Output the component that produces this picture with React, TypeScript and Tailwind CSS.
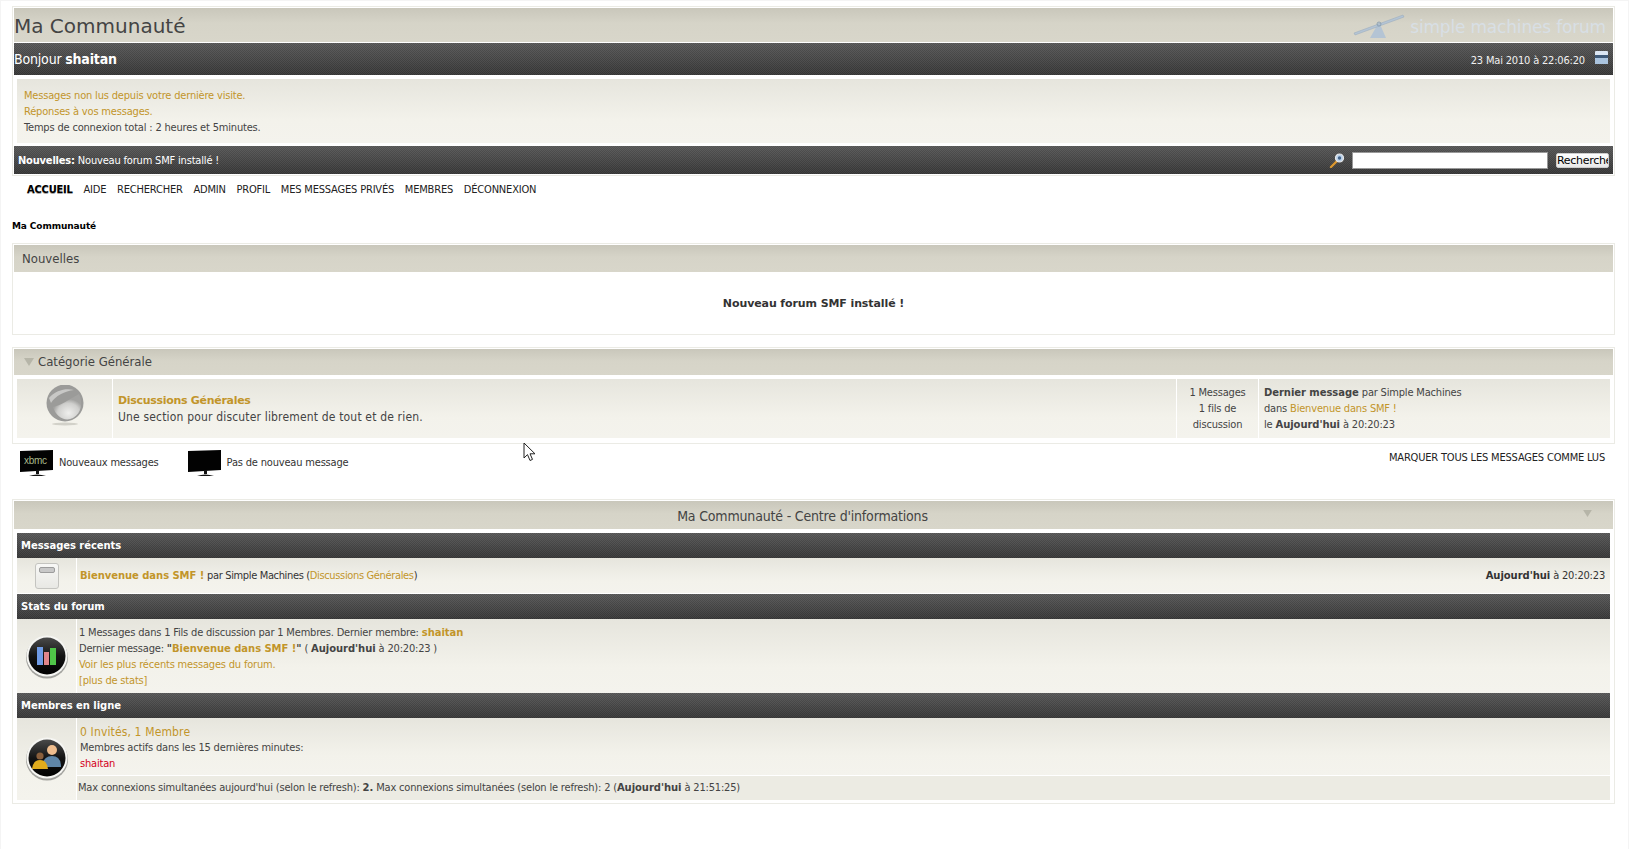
const darkBar =
  'bg-[repeating-conic-gradient(rgba(0,0,0,0.1)_0_25%,rgba(255,255,255,0.03)_0_50%),linear-gradient(#5c5c5c,#3a3a3a)] bg-[length:2px_2px,100%_100%]'
const tanBar = 'bg-[linear-gradient(#c9c7bb,#d6d4c8_45%,#d8d6ca)]'
const cell = 'bg-[linear-gradient(#e6e5dd,#f3f2eb_65%,#f4f3ed)]'
const link = 'text-[#c2952a]'
const bold = "font-bold text-[10px] tracking-[-0.05px] font-['DejaVu_Sans',sans-serif]"

function Triangle({ className }: { className: string }) {
  return (
    <svg viewBox="0 0 10 8" className={className}>
      <path d="M0 0h10L5 8z" fill="#b6b5a8" />
    </svg>
  )
}

function SmfLogo() {
  return (
    <div className="flex items-center text-[17px] leading-none text-[#d8dfe5] font-['DejaVu_Sans',sans-serif]">
      <svg width="52" height="26" viewBox="0 0 52 26" className="mr-[5px] mt-[2px]">
        <path d="M17 25 L26 9 L33 25z" fill="#b4c4d4" />
        <path d="M1 20 L50 2 L51 4 L2 22z" fill="#b4c4d4" stroke="#96a9bb" strokeWidth="0.5" />
        <circle cx="26" cy="11" r="2" fill="none" stroke="#8298ac" strokeWidth="0.8" />
      </svg>
      <span className="pt-[4px]">simple machines forum</span>
    </div>
  )
}

function MinusIcon() {
  return (
    <svg width="13" height="13" viewBox="0 0 13 13">
      <rect width="13" height="13" rx="1" fill="#dbe6f3" />
      <rect y="4" width="13" height="3" fill="#3f5a79" />
      <rect y="7" width="13" height="6" rx="1" fill="#a9c3de" />
    </svg>
  )
}

function SearchIcon() {
  return (
    <svg width="16" height="15" viewBox="0 0 16 15">
      <path d="M2 14 L8 8" stroke="#d9962f" strokeWidth="2.4" strokeLinecap="round" />
      <circle cx="10.5" cy="5" r="4" fill="#bcd2ea" stroke="#e8e8e8" strokeWidth="1.2" />
      <circle cx="10.5" cy="5" r="1.7" fill="#41638b" />
    </svg>
  )
}

function ForumSphere() {
  return (
    <svg width="38" height="42" viewBox="0 0 38 42">
      <defs>
        <radialGradient id="sphere" cx="0.55" cy="0.75" r="0.55">
          <stop offset="0" stopColor="#efefed" />
          <stop offset="0.7" stopColor="#cfcfcd" />
          <stop offset="1" stopColor="#a3a3a1" />
        </radialGradient>
      </defs>
      <ellipse cx="19" cy="39" rx="13" ry="1.5" fill="#d2d1c9" />
      <circle cx="19" cy="18" r="18.5" fill="#9b9b99" />
      <path d="M7 22 C14 21 24 14 33 9 C37 17 36 28 27 33 C19 37 10 32 7 22z" fill="url(#sphere)" />
      <path d="M3 13 C10 5 20 3 28 5 C19 6 9 11 5 18z" fill="#c8c8c6" />
    </svg>
  )
}

function Monitor({ logo }: { logo?: boolean }) {
  return (
    <svg width="34" height="28" viewBox="0 0 34 28" className="shrink-0">
      <path d="M0 1 L33 0 V20 L0 22z" fill="#020202" />
      <rect x="16" y="20" width="3" height="4" fill="#111" />
      <path d="M9 26 Q17 23 26 26z" fill="#111" />
      {logo && (
        <text x="4" y="14" fontSize="10" fontFamily="Liberation Sans, sans-serif" fill="#a9b98a" letterSpacing="-0.3">
          xbmc
        </text>
      )}
    </svg>
  )
}

function RoundBadge({ id, children }: { id: string; children: React.ReactNode }) {
  return (
    <svg width="42" height="48" viewBox="0 0 42 48">
      <defs>
        <linearGradient id={id} x1="0" y1="0" x2="0" y2="1">
          <stop offset="0" stopColor="#4a4a4a" />
          <stop offset="0.5" stopColor="#141414" />
          <stop offset="1" stopColor="#000" />
        </linearGradient>
      </defs>
      <circle cx="21" cy="24.5" r="21" fill="#a3a39f" />
      <circle cx="21" cy="23" r="20.5" fill="#f6f6f3" />
      <circle cx="21" cy="23" r="18.5" fill={`url(#${id})`} />
      {children}
    </svg>
  )
}

function PostIcon() {
  return (
    <div className="h-[26px] w-[24px] rounded-[3px] border border-[#c4c4c0] bg-[linear-gradient(#f8f8f6,#e8e8e4)] px-[3px] pt-[3px]">
      <div className="h-[6px] rounded-[2px] border border-[#9c9c9c] bg-[#c8c8c8]" />
    </div>
  )
}

function Cursor() {
  return (
    <svg width="14" height="20" viewBox="0 0 14 20" className="absolute left-[522px] top-[441px]">
      <path d="M1 1 V16 L4.5 12.6 L7 18.5 L9.5 17.4 L7 11.8 H12z" fill="#fff" stroke="#222" strokeWidth="1" />
    </svg>
  )
}

export default function App() {
  return (
    <div className="relative h-[849px] overflow-hidden border-x border-t border-[#f4f4f4] bg-white px-[11px] pt-[5px] text-[11px] leading-[16px] tracking-[-0.18px] text-[#444] font-['DejaVu_Sans_Condensed','DejaVu_Sans',sans-serif]">
      {/* top header */}
      <div className="h-[170px] w-[1603px] border border-[#ebebe5] p-px">
        <div className={`${tanBar} flex h-[34px] w-[1599px] items-center justify-between pr-[7px]`}>
          <span className="pt-[2px] text-[20px] tracking-normal text-[#444] font-['DejaVu_Sans',sans-serif]">Ma Communauté</span>
          <SmfLogo />
        </div>
        <div className={`${darkBar} mt-px flex h-[32px] w-[1599px] items-center text-white`}>
          <span className="text-[14px]">
            Bonjour <b>shaitan</b>
          </span>
          <span className="mr-[10px] ml-auto mt-[3px] text-[#f0f0f0]">23 Mai 2010 à 22:06:20</span>
          <span className="mr-[5px] -mt-[3px]">
            <MinusIcon />
          </span>
        </div>
        <div className="w-[1599px] px-[3px] py-[4px]">
          <div className={`${cell} h-[64px] pl-[7px] pt-[9px]`}>
            <div className={link}>Messages non lus depuis votre dernière visite.</div>
            <div className={link}>Réponses à vos messages.</div>
            <div>Temps de connexion total : 2 heures et 5minutes.</div>
          </div>
        </div>
        <div className={`${darkBar} -mt-px flex h-[28px] w-[1599px] items-center pl-[4px] text-white`}>
          <span className="mt-px">
            <b>Nouvelles:</b> Nouveau forum SMF installé !
          </span>
          <span className="ml-auto mr-[7px]">
            <SearchIcon />
          </span>
          <input className="h-[17px] w-[196px] border border-[#999] bg-white" />
          <div className="mx-[4px] ml-[8px] h-[15px] w-[53px] overflow-hidden rounded-[2px] border border-[#ccc] bg-[linear-gradient(#fff,#e8e8e8)] text-[11px] leading-[14px] tracking-[-0.3px] whitespace-nowrap text-black font-['DejaVu_Sans',sans-serif]">
            Recherche
          </div>
        </div>
      </div>

      {/* menu */}
      <nav className="mt-[6px] flex h-[16px] gap-[10.7px] pl-[15px] whitespace-nowrap text-[#222]">
        <span className="font-bold text-black [text-shadow:0_1px_#aaa]">ACCUEIL</span>
        <span>AIDE</span>
        <span>RECHERCHER</span>
        <span>ADMIN</span>
        <span>PROFIL</span>
        <span>MES MESSAGES PRIVÉS</span>
        <span>MEMBRES</span>
        <span>DÉCONNEXION</span>
      </nav>
      <div className="mt-[20px] text-[9px] font-bold tracking-[-0.1px] text-black font-['DejaVu_Sans',sans-serif]">Ma Communauté</div>

      {/* news */}
      <div className="mt-[9px] h-[92px] w-[1603px] border border-[#ebebe5] p-px">
        <div className={`${tanBar} flex h-[27px] w-[1599px] items-center pl-[8px] text-[13px] tracking-normal`}>Nouvelles</div>
        <div className="pt-[24px] text-center text-[11px] font-bold tracking-[-0.1px] text-[#333] font-['DejaVu_Sans',sans-serif]">
          Nouveau forum SMF installé !
        </div>
      </div>

      {/* category */}
      <div className="mt-[12px] h-[97px] w-[1603px] border border-[#ebebe5] p-px">
        <div className={`${tanBar} flex h-[26px] w-[1599px] items-center pl-[10px] text-[13px] tracking-normal`}>
          <Triangle className="mr-[4px] h-[8px] w-[10px]" />
          Catégorie Générale
        </div>
        <div className="flex h-[63px] w-[1599px] px-[3px] pt-[4px]">
          <div className={`${cell} flex h-[59px] w-[95px] justify-center pt-[6px]`}>
            <ForumSphere />
          </div>
          <div className={`${cell} ml-px flex h-[59px] w-[1063px] flex-col justify-center pl-[5px] pt-px leading-[16px]`}>
            <span className={`${link} text-[11px] font-bold font-['DejaVu_Sans',sans-serif] tracking-[-0.3px]`}>
              Discussions Générales
            </span>
            <span className="text-[12px] tracking-[0.17px]">Une section pour discuter librement de tout et de rien.</span>
          </div>
          <div className={`${cell} ml-px flex h-[59px] w-[81px] items-center justify-center text-center pt-px`}>
            <span>
              1 Messages
              <br />1 fils de
              <br />
              discussion
            </span>
          </div>
          <div className={`${cell} ml-px flex h-[59px] flex-1 flex-col justify-center pl-[5px] pt-px`}>
            <span>
              <b className={bold}>Dernier message</b> par Simple Machines
            </span>
            <span>
              dans <span className={link}>Bienvenue dans SMF !</span>
            </span>
            <span>
              le <b className={bold}>Aujourd'hui</b> à 20:20:23
            </span>
          </div>
        </div>
      </div>

      {/* legend */}
      <div className="mt-[6px] flex h-[49px] w-[1603px] text-[#333]">
        <div className="flex items-start pl-[8px]">
          <Monitor logo />
          <span className="ml-[5px] mt-[5px]">Nouveaux messages</span>
          <span className="ml-[29px]">
            <Monitor />
          </span>
          <span className="ml-[5px] mt-[5px]">Pas de nouveau message</span>
        </div>
        <span className="ml-auto mr-[10px] text-[#222]">MARQUER TOUS LES MESSAGES COMME LUS</span>
      </div>

      {/* info center */}
      <div className="h-[305px] w-[1603px] border border-[#ebebe5] p-px">
        <div className={`${tanBar} relative flex h-[28px] w-[1599px] items-center justify-center pr-[22px] pt-px text-[14px]`}>
          Ma Communauté - Centre d'informations
          <Triangle className="absolute right-[21px] top-[9px] h-[7px] w-[9px]" />
        </div>
        <div className="w-[1599px] px-[3px] pt-[4px]">
          <div className={`${darkBar} flex h-[25px] items-center pl-[4px] pt-px text-white`}>
            <span className={bold}>Messages récents</span>
          </div>
          <div className="flex h-[35px]">
            <div className={`${cell} flex w-[59px] items-center justify-center`}>
              <PostIcon />
            </div>
            <div className={`${cell} ml-px flex flex-1 items-center justify-between pr-[5px] pl-[3px] pt-px text-[#333]`}>
              <span className="tracking-[-0.35px]">
                <b className={`${link} ${bold}`}>Bienvenue dans SMF !</b> par Simple Machines (
                <span className={link}>Discussions Générales</span>)
              </span>
              <span>
                <b className={bold}>Aujourd'hui</b> à 20:20:23
              </span>
            </div>
          </div>
          <div className={`${darkBar} mt-px flex h-[25px] items-center pl-[4px] pt-px text-white`}>
            <span className={bold}>Stats du forum</span>
          </div>
          <div className="flex h-[74px]">
            <div className={`${cell} flex w-[59px] items-center justify-center pt-px`}>
              <RoundBadge id="statBall">
                <rect x="11" y="14" width="6" height="18" fill="#6f9be6" />
                <rect x="18" y="19" width="5" height="13" fill="#e0858b" />
                <rect x="24" y="15" width="6" height="17" fill="#4fc548" />
              </RoundBadge>
            </div>
            <div className={`${cell} ml-px flex-1 pl-[2px] pt-[6px]`}>
              <div>
                1 Messages dans 1 Fils de discussion par 1 Membres. Dernier membre:{' '}
                <b className={`${link} ${bold}`}>shaitan</b>
              </div>
              <div>
                Dernier message:{' '}
                <b className={bold}>
                  "<span className={link}>Bienvenue dans SMF !</span>"
                </b>{' '}
                ( <b className={bold}>Aujourd'hui</b> à 20:20:23 )
              </div>
              <div className={link}>Voir les plus récents messages du forum.</div>
              <div className={link}>[plus de stats]</div>
            </div>
          </div>
          <div className={`${darkBar} flex h-[25px] items-center pl-[4px] pt-px text-white`}>
            <span className={bold}>Membres en ligne</span>
          </div>
          <div className="flex h-[82px]">
            <div className={`${cell} flex w-[59px] items-center justify-center`}>
              <RoundBadge id="memberBall">
                <circle cx="26" cy="15" r="5" fill="#efbd8e" />
                <path d="M16 32 Q17 21 26 21 Q35 21 35 32z" fill="#5f86a8" />
                <circle cx="14" cy="21" r="3.6" fill="#8a5f3c" />
                <path d="M6 34 Q7 25 14 25 Q21 25 22 34z" fill="#e0ac1d" />
              </RoundBadge>
            </div>
            <div className="ml-px flex flex-1 flex-col">
              <div className={`${cell} h-[57px] pl-[3px] pt-[6px]`}>
                <div className={`${link} text-[12px] tracking-[0.14px]`}>0 Invités, 1 Membre</div>
                <div>Membres actifs dans les 15 dernières minutes:</div>
                <div className="text-[#d4001a]">shaitan</div>
              </div>
              <div className="mt-px flex h-[24px] items-center bg-[#ecebe3] pl-px">
                <span>
                  Max connexions simultanées aujourd'hui (selon le refresh): <b className={bold}>2.</b> Max connexions simultanées (selon le
                  refresh): 2 (<b className={bold}>Aujourd'hui</b> à 21:51:25)
                </span>
              </div>
            </div>
          </div>
        </div>
      </div>
      <Cursor />
    </div>
  )
}
